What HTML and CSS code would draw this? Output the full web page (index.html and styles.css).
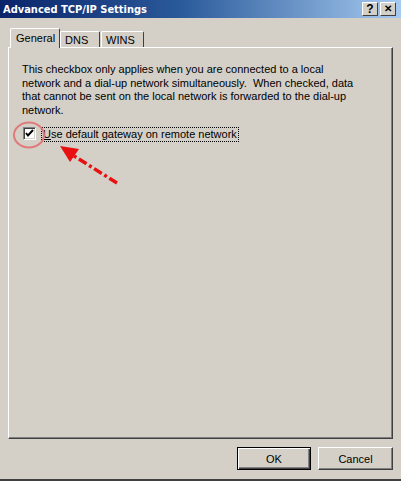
FILE: index.html
```html
<!DOCTYPE html>
<html>
<head>
<meta charset="utf-8">
<link rel="stylesheet" href="styles.css">
</head>
<body>
<div class="window">
  <div class="titlebar">
    <span class="title">Advanced TCP/IP Settings</span>
    <div class="tb-buttons">
      <span class="tb-btn">?</span>
      <span class="tb-btn tb-close">&#x2715;</span>
    </div>
  </div>
  <div class="content">
    <div class="tabs">
      <div class="tab selected">General</div>
      <div class="tab tab-dns">DNS</div>
      <div class="tab tab-wins">WINS</div>
    </div>
    <div class="panel">
      <p class="desc">This checkbox only applies when you are connected to a local<br>network and a dial-up network simultaneously.&nbsp; When checked, data<br>that cannot be sent on the local network is forwarded to the dial-up<br>network.</p>
      <div class="check-row">
        <span class="checkbox">
          <svg width="9" height="9" viewBox="0 0 9 9"><path d="M1 4 L3 6.5 L8 1" fill="none" stroke="#000" stroke-width="2"/></svg>
        </span>
        <span class="label"><u>U</u>se default gateway on remote network</span>
      </div>
    </div>
    <div class="buttons">
      <button class="btn default">OK</button>
      <button class="btn cancel">Cancel</button>
    </div>
  </div>
  <svg class="annot" width="401" height="481" viewBox="0 0 401 481">
    <ellipse cx="29" cy="135" rx="15" ry="12.5" fill="none" stroke="#e07a7a" stroke-width="2"/>
    <line x1="117" y1="183" x2="74" y2="156" stroke="#e81010" stroke-width="3.5" stroke-dasharray="9 3 3 3"/>
    <polygon points="60,146 79,149 70,162" fill="#e81010"/>
  </svg>
</div>
</body>
</html>
```

FILE: styles.css
```css
html, body {
  margin: 0;
  padding: 0;
  background: #d4d0c8;
}
.window {
  position: relative;
  width: 401px;
  height: 481px;
  box-sizing: border-box;
  background: #d4d0c8;
  border-bottom: 2px solid #404040;
  font-family: "Liberation Sans", Arial, sans-serif;
  font-size: 11px;
  color: #000;
  display: flex;
  flex-direction: column;
}
.titlebar {
  height: 18px;
  flex: none;
  display: flex;
  align-items: center;
  justify-content: space-between;
  padding: 0 5px 0 3px;
  background: linear-gradient(90deg, #0a246a 0%, #2a5a9a 45%, #a6caf0 100%);
}
.title {
  color: #fff;
  font-weight: bold;
  font-size: 11px;
  font-family: "DejaVu Sans Condensed", "Liberation Sans", sans-serif;
}
.tb-buttons {
  display: flex;
  gap: 2px;
}
.tb-btn {
  width: 16px;
  height: 14px;
  box-sizing: border-box;
  background: #d4d0c8;
  border-top: 1px solid #fff;
  border-left: 1px solid #fff;
  border-right: 1px solid #404040;
  border-bottom: 1px solid #404040;
  display: flex;
  align-items: center;
  justify-content: center;
  font-weight: bold;
  font-size: 12px;
  line-height: 1;
}
.tb-close {
  font-size: 10px;
}
.content {
  flex: 1;
  display: flex;
  flex-direction: column;
  padding: 10px 8px 0 8px;
}
.tabs {
  display: flex;
  align-items: flex-end;
  height: 19px;
  padding-left: 2px;
}
.tab {
  box-sizing: border-box;
  height: 16px;
  background: #d4d0c8;
  border-top: 1px solid #fff;
  border-left: 1px solid #fff;
  border-right: 1px solid #404040;
  border-top-left-radius: 2px;
  border-top-right-radius: 2px;
  display: flex;
  align-items: center;
  padding-left: 4px;
}
.tab.selected {
  position: relative;
  z-index: 1;
  height: 20px;
  margin-bottom: -1px;
  width: 50px;
  padding-left: 5px;
  padding-bottom: 2px;
}
.tab-dns {
  width: 40px;
}
.tab-wins {
  width: 43px;
  margin-left: 1px;
}
.panel {
  box-sizing: border-box;
  height: 392px;
  border-top: 1px solid #fff;
  border-left: 1px solid #fff;
  border-right: 1px solid #404040;
  border-bottom: 1px solid #404040;
  box-shadow: inset -1px -1px 0 #808080;
  padding: 15px 12px 0 13px;
}
.desc {
  margin: 0;
  line-height: 13.5px;
}
.check-row {
  display: flex;
  align-items: center;
  margin-top: 9px;
  margin-left: 1px;
  height: 17px;
}
.checkbox {
  width: 13px;
  height: 13px;
  box-sizing: border-box;
  margin-top: -3px;
  background: #fff;
  border-top: 1px solid #808080;
  border-left: 1px solid #808080;
  border-right: 1px solid #fff;
  border-bottom: 1px solid #fff;
  box-shadow: inset 1px 1px 0 #404040, inset -1px -1px 0 #d4d0c8;
  display: flex;
  align-items: center;
  justify-content: center;
}
.label {
  margin-left: 5px;
  padding: 0 1px 1px 1px;
  border: 1px dotted #000;
}
.buttons {
  display: flex;
  justify-content: flex-end;
  gap: 7px;
  margin-top: 8px;
}
.btn {
  height: 23px;
  box-sizing: border-box;
  background: #d4d0c8;
  font-family: "Liberation Sans", Arial, sans-serif;
  font-size: 11px;
  color: #000;
  padding: 0;
  border-top: 1px solid #fff;
  border-left: 1px solid #fff;
  border-right: 1px solid #404040;
  border-bottom: 1px solid #404040;
  box-shadow: inset -1px -1px 0 #808080;
}
.btn.default {
  width: 74px;
  border: 1px solid #000;
  box-shadow: inset 1px 1px 0 #fff, inset -1px -1px 0 #404040, inset -2px -2px 0 #808080;
}
.btn.cancel {
  width: 75px;
}
.annot {
  position: absolute;
  left: 0;
  top: 0;
  pointer-events: none;
}
```
